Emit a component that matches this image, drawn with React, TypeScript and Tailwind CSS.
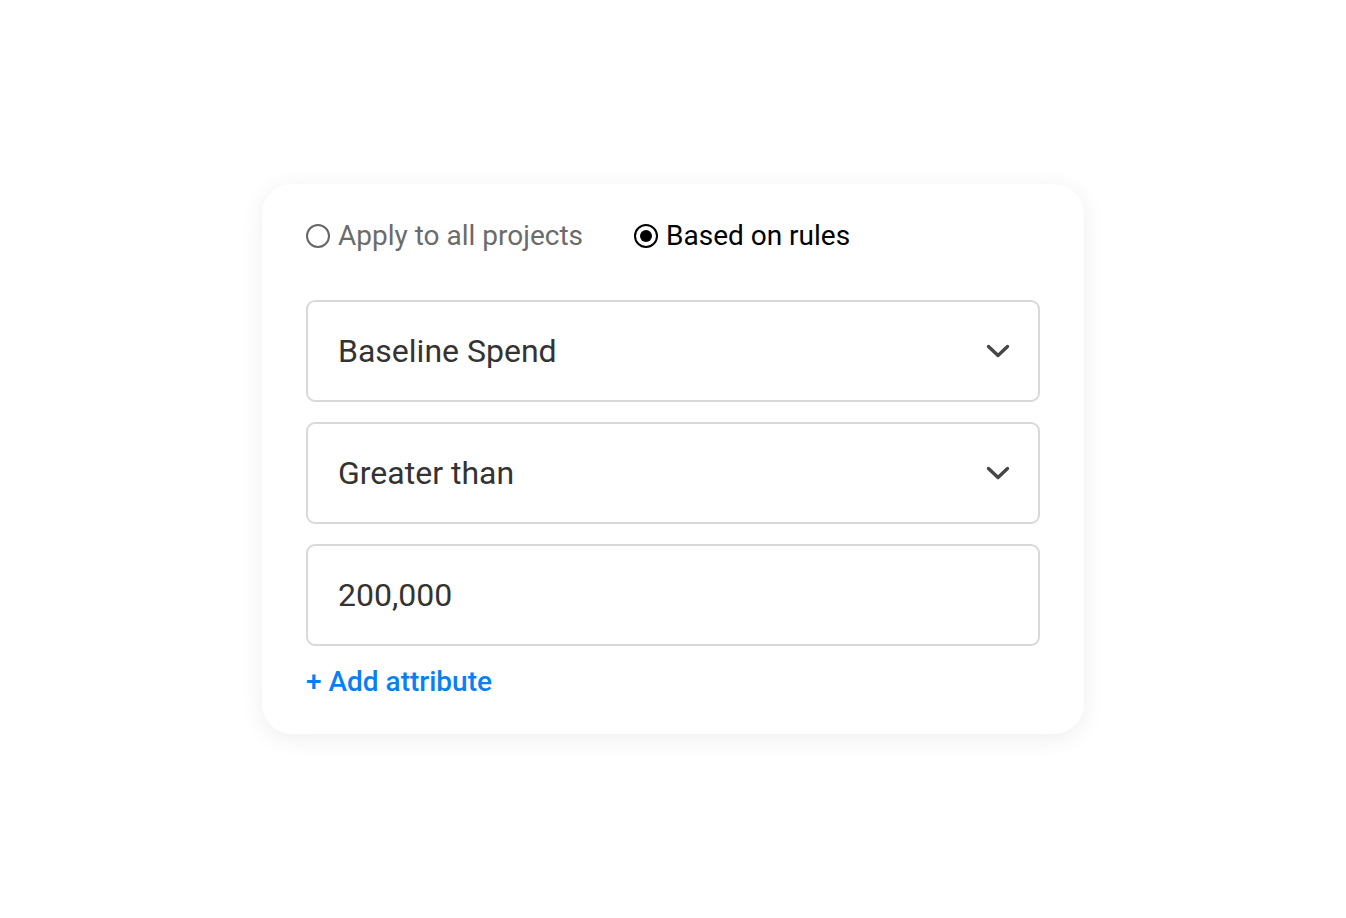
import { useState } from 'react'

function Chevron() {
  return (
    <svg width="24" height="16" viewBox="0 0 24 16" fill="none" className="shrink-0">
      <path d="M2.5 3.5 L12 12.5 L21.5 3.5" stroke="#464646" strokeWidth="3.4" strokeLinecap="round" strokeLinejoin="round" />
    </svg>
  )
}

function Radio({ checked, label, onClick }: { checked: boolean; label: string; onClick: () => void }) {
  return (
    <button type="button" onClick={onClick} className="flex items-center gap-[8px] cursor-pointer">
      <span
        className={
          checked
            ? 'flex h-[24px] w-[24px] items-center justify-center rounded-full border-[2.5px] border-black'
            : 'flex h-[24px] w-[24px] items-center justify-center rounded-full border-[2px] border-[#666]'
        }
      >
        {checked && <span className="h-[12px] w-[12px] rounded-full bg-black" />}
      </span>
      <span className={checked ? 'text-[28px] text-black' : 'text-[28px] text-[#6b6b6b]'}>{label}</span>
    </button>
  )
}

function SelectBox({ value }: { value: string }) {
  return (
    <div className="flex h-[102px] items-center justify-between rounded-[9px] border-2 border-[#d9d9d9] pl-[30px] pr-[28px]">
      <span className="text-[32px] text-[#333]">{value}</span>
      <Chevron />
    </div>
  )
}

export default function App() {
  const [mode, setMode] = useState<'all' | 'rules'>('rules')

  return (
    <div className="flex min-h-[918px] w-full items-start justify-center bg-white pt-[184px] font-['Roboto',sans-serif]">
      <div className="w-[822px] rounded-[30px] bg-white px-[44px] pt-[36px] pb-[34px] shadow-[0_4px_24px_rgba(0,0,0,0.07)]">
        <div className="flex items-center gap-[51px] h-[32px]">
          <Radio checked={mode === 'all'} label="Apply to all projects" onClick={() => setMode('all')} />
          <Radio checked={mode === 'rules'} label="Based on rules" onClick={() => setMode('rules')} />
        </div>

        <div className="mt-[48px] flex flex-col gap-[20px]">
          <SelectBox value="Baseline Spend" />
          <SelectBox value="Greater than" />
          <div className="flex h-[102px] items-center rounded-[9px] border-2 border-[#d9d9d9] pl-[30px]">
            <span className="text-[32px] text-[#333]">200,000</span>
          </div>
        </div>

        <button type="button" className="mt-[18px] text-[28px] font-medium text-[#0a7ff5] leading-[36px]">
          + Add attribute
        </button>
      </div>
    </div>
  )
}
